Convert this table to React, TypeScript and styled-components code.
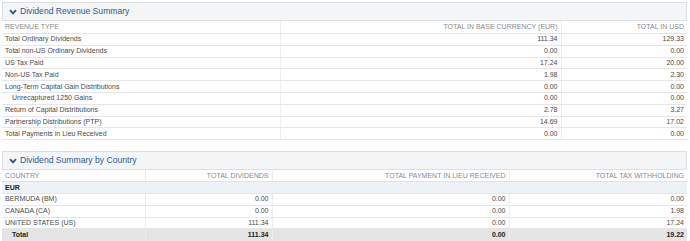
import React from "react";
import styled, { createGlobalStyle } from "styled-components";

const Global = createGlobalStyle`
  html, body { margin: 0; padding: 0; background: #fff; }
  body { font-family: "Liberation Sans", Arial, sans-serif; }
`;

const Page = styled.div`
  padding: 2px 3px 0 2px;
  display: flex;
  flex-direction: column;
  gap: 11px;
`;

const Section = styled.section`
  display: flex;
  flex-direction: column;
`;

const SectionHeader = styled.div`
  height: 17px;
  border: 1px solid #dcdfe4;
  background: #f4f5f7;
  display: flex;
  align-items: center;
  gap: 3px;
  padding-left: 6px;
  color: #2d5b8f;
  font-size: 8.6px;
  line-height: 1;
`;

const Table = styled.table<{ $headH: number; $rowH: number }>`
  --head-h: ${(p) => p.$headH}px;
  --row-h: ${(p) => p.$rowH}px;
  width: 100%;
  border-collapse: collapse;
  table-layout: fixed;
  font-size: 7px;
  line-height: 8px;
  color: #4a4a4a;
`;

const Th = styled.th<{ $align?: string }>`
  font-weight: normal;
  color: #8a8a8a;
  text-transform: uppercase;
  text-align: ${(p) => p.$align || "left"};
  height: var(--head-h);
  padding: 0 3px;
  border-bottom: 1px solid #e2e2e2;
  & + & { border-left: 1px solid #ececec; }
  white-space: nowrap;
`;

const Tr = styled.tr<{ $variant?: "group" | "total" }>`
  background: ${(p) =>
    p.$variant === "group" ? "#eef1f5" : p.$variant === "total" ? "#e4e4e4" : "#fff"};
  font-weight: ${(p) => (p.$variant ? "bold" : "normal")};
  color: ${(p) => (p.$variant ? "#222" : "#4a4a4a")};
`;

const Td = styled.td<{ $align?: string; $indent?: number }>`
  height: var(--row-h);
  padding: 0 3px 0 ${(p) => 3 + (p.$indent || 0)}px;
  text-align: ${(p) => p.$align || "left"};
  border-bottom: 1px solid #e6e6e6;
  white-space: nowrap;
  & + & { border-left: 1px solid #ececec; }
`;

const GroupTd = styled.td`
  height: var(--row-h);
  padding: 0 3px;
  border-bottom: 1px solid #e6e6e6;
`;

const Chevron = () => (
  <svg width="8" height="6" viewBox="0 0 8 6">
    <path d="M1 1.2 L4 4.4 L7 1.2" fill="none" stroke="#2d5b8f" strokeWidth="1.9" />
  </svg>
);

const revenue: [string, string, string, number?][] = [
  ["Total Ordinary Dividends", "111.34", "129.33"],
  ["Total non-US Ordinary Dividends", "0.00", "0.00"],
  ["US Tax Paid", "17.24", "20.00"],
  ["Non-US Tax Paid", "1.98", "2.30"],
  ["Long-Term Capital Gain Distributions", "0.00", "0.00"],
  ["Unrecaptured 1250 Gains", "0.00", "0.00", 7],
  ["Return of Capital Distributions", "2.78", "3.27"],
  ["Partnership Distributions (PTP)", "14.69", "17.02"],
  ["Total Payments in Lieu Received", "0.00", "0.00"],
];

const countries: [string, string, string, string][] = [
  ["BERMUDA (BM)", "0.00", "0.00", "0.00"],
  ["CANADA (CA)", "0.00", "0.00", "1.98"],
  ["UNITED STATES (US)", "111.34", "0.00", "17.24"],
];

export default function App() {
  return (
    <>
      <Global />
      <Page>
        <Section>
          <SectionHeader>
            <Chevron />
            Dividend Revenue Summary
          </SectionHeader>
          <Table $headH={12} $rowH={10.8}>
            <colgroup>
              <col style={{ width: "278px" }} />
              <col style={{ width: "281px" }} />
              <col />
            </colgroup>
            <thead>
              <tr>
                <Th>Revenue Type</Th>
                <Th $align="right">Total in Base Currency (EUR)</Th>
                <Th $align="right">Total in USD</Th>
              </tr>
            </thead>
            <tbody>
              {revenue.map(([name, eur, usd, indent]) => (
                <Tr key={name}>
                  <Td $indent={indent}>{name}</Td>
                  <Td $align="right">{eur}</Td>
                  <Td $align="right">{usd}</Td>
                </Tr>
              ))}
            </tbody>
          </Table>
        </Section>
        <Section>
          <SectionHeader>
            <Chevron />
            Dividend Summary by Country
          </SectionHeader>
          <Table $headH={11} $rowH={10.8}>
            <colgroup>
              <col style={{ width: "143px" }} />
              <col style={{ width: "127px" }} />
              <col style={{ width: "237px" }} />
              <col />
            </colgroup>
            <thead>
              <tr>
                <Th>Country</Th>
                <Th $align="right">Total Dividends</Th>
                <Th $align="right">Total Payment in Lieu Received</Th>
                <Th $align="right">Total Tax Withholding</Th>
              </tr>
            </thead>
            <tbody>
              <Tr $variant="group">
                <GroupTd colSpan={4}>EUR</GroupTd>
              </Tr>
              {countries.map(([c, d, p, t]) => (
                <Tr key={c}>
                  <Td>{c}</Td>
                  <Td $align="right">{d}</Td>
                  <Td $align="right">{p}</Td>
                  <Td $align="right">{t}</Td>
                </Tr>
              ))}
              <Tr $variant="total">
                <Td $indent={7}>Total</Td>
                <Td $align="right">111.34</Td>
                <Td $align="right">0.00</Td>
                <Td $align="right">19.22</Td>
              </Tr>
            </tbody>
          </Table>
        </Section>
      </Page>
    </>
  );
}
